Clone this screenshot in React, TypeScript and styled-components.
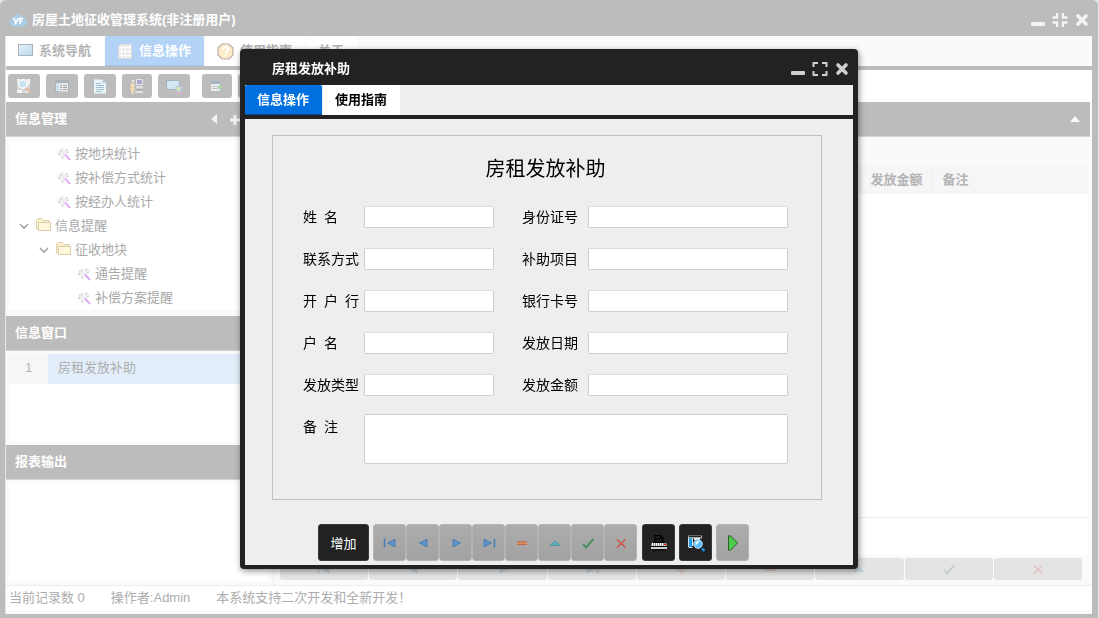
import React from "react";
import styled, { createGlobalStyle, css } from "styled-components";

const GREY = "#bcbcbc";
const INK = "#222222";

const GlobalStyle = createGlobalStyle`
  *, *::before, *::after { box-sizing: border-box; }
  body {
    margin: 0;
    font-family: "Liberation Sans", "Noto Sans CJK SC", sans-serif;
    font-size: 13px;
    line-height: 20px;
    color: #b4b4b4;
    background: #dde6ee;
  }
  button, input, textarea { font: inherit; color: inherit; margin: 0; }
  h1, h2, p, ul { margin: 0; padding: 0; font-size: inherit; }
`;

/* ---------- main window ---------- */

const AppWindow = styled.div`
  min-height: 100vh;
  display: flex;
  flex-direction: column;
  margin-right: 1px;
  padding: 0 6px 4px 5px;
  background: ${GREY};
  border-radius: 6px 6px 0 0;
`;

const TitleBar = styled.header<{ $dark?: boolean }>`
  height: 36px;
  flex: none;
  display: flex;
  align-items: center;
  justify-content: space-between;
  color: #ffffff;
  padding: ${(p) => (p.$dark ? "3px 3px 0 27px" : "3px 2px 0 4px")};
`;

const TitleText = styled.h1`
  display: flex;
  align-items: center;
  gap: 5px;
  font-size: 13px;
  font-weight: 700;
`;

const WindowControls = styled.div<{ $dark?: boolean }>`
  display: flex;
  gap: 6px;
  color: ${(p) => (p.$dark ? "#cfcfcf" : "#f3f3f3")};
`;

const BareButton = styled.button`
  display: flex;
  align-items: center;
  justify-content: center;
  padding: 0;
  border: 0;
  background: none;
`;

const WindowBody = styled.div`
  flex: 1;
  display: flex;
  flex-direction: column;
  background: #fafafa;
  border-left: 1px solid #e4e4e4;
`;

const TabBar = styled.nav<{ $dark?: boolean }>`
  display: flex;
  flex: none;
  gap: 1px;
  height: 34px;
  border-bottom: 4px solid ${(p) => (p.$dark ? INK : GREY)};
`;

const Tab = styled.button<{ $active?: boolean; $dark?: boolean }>`
  display: flex;
  align-items: center;
  gap: 6px;
  height: 30px;
  border: 0;
  padding: 0 13px 0 12px;
  font-weight: 700;
  border-radius: 2px 2px 0 0;
  background: #ffffff;
  color: ${(p) => (p.$dark ? "#000000" : "#b4b4b4")};
  ${(p) =>
    p.$active &&
    css`
      background: ${p.$dark ? "#0070e0" : "#b2d3f5"};
      color: #ffffff;
      box-shadow: inset 0 -1px ${p.$dark ? "#0b4a8c" : "#a3c4e6"};
    `}
`;

const Toolbar = styled.div`
  display: flex;
  flex: none;
  gap: 6px;
  padding: 4px 2px;
  height: 32px;
  background: #ffffff;
`;

const ToolGroup = styled.div`
  display: flex;
  gap: 6px;
  margin-right: 6px;
`;

const ToolButton = styled(BareButton)<{ $narrow?: boolean }>`
  width: ${(p) => (p.$narrow ? 30 : 32)}px;
  height: 24px;
  border-radius: 3px;
  background: ${GREY};
`;

const Workspace = styled.main`
  flex: 1;
  display: grid;
  grid-template-columns: 268px minmax(0, 1fr);
  gap: 4px;
  border-bottom: 1px solid #ececec;
  padding-right: 2px;
`;

const Sidebar = styled.aside`
  display: flex;
  flex-direction: column;
  border-right: 1px solid #efefef;
`;

const PanelHeader = styled.div`
  display: flex;
  flex: none;
  align-items: center;
  justify-content: space-between;
  height: 35px;
  padding: 0 9px;
  color: #ffffff;
  background: ${GREY};
  border-bottom: 1px solid #d4d4d4;
`;

const PanelTitle = styled.h2`
  font-weight: 700;
`;

const PanelTools = styled.div`
  display: flex;
  gap: 11px;
  margin-right: 23px;
`;

const PanelBody = styled.div<{ $height?: number }>`
  ${(p) => (p.$height ? `height: ${p.$height}px;` : "flex: 1;")}
  margin: 3px 4px 4px 3px;
  background: #ffffff;
`;

const TreeBody = styled(PanelBody)`
  margin-bottom: 6px;
  padding-top: 2px;
`;

const Tree = styled.ul`
  list-style: none;
`;

const TreeItem = styled.li<{ $level: number }>`
  display: flex;
  align-items: center;
  gap: 3px;
  height: 24px;
  padding-left: ${(p) => p.$level * 20 - 12}px;
  color: #a9a9a9;
`;

const Twisty = styled.span`
  display: flex;
  width: 15px;
  padding-left: 2px;
`;

const ListTable = styled.table`
  width: 100%;
  border-collapse: collapse;
  background: #e2effb;
`;

const ListIndex = styled.th`
  width: 39px;
  height: 30px;
  padding: 0 0 2px;
  font-weight: 400;
  background: #f6f6f6;
`;

const ListName = styled.td`
  padding: 0 10px 2px;
  color: #adadad;
`;

const ContentPane = styled.section`
  display: flex;
  flex-direction: column;
`;

const GridArea = styled.div`
  flex: 1;
  display: flex;
  flex-direction: column;
  margin: 28px 2px 0 0;
  background: #ffffff;
`;

const DataTable = styled.table`
  width: 100%;
  border-collapse: collapse;
  table-layout: fixed;
`;

const HeadCell = styled.th<{ $width?: number }>`
  width: ${(p) => (p.$width ? p.$width + "px" : "auto")};
  height: 29px;
  padding: 0 8px 0 10px;
  text-align: left;
  white-space: nowrap;
  font-weight: 700;
  background: #f6f6f6;
  border-right: 1px solid #efefef;
  &:last-child { border-right: 0; }
`;

const SummaryRow = styled.div`
  height: 38px;
  margin-top: auto;
  border-top: 1px solid #ebebeb;
`;

const RecordBar = styled.div`
  display: flex;
  flex: none;
  gap: 1px;
  padding: 3px 8px 5px 2px;
`;

const RecordButton = styled(BareButton)`
  flex: 1;
  height: 22px;
  border-radius: 3px;
  background: #e4e4e4;
  svg { opacity: 0.2; }
`;

const StatusBar = styled.footer`
  display: flex;
  flex: none;
  gap: 26px;
  height: 28px;
  padding: 2px 4px 2px 3px;
  background: #ffffff;
  border-bottom: 4px solid #fafafa;
  color: #adadad;
`;

/* ---------- dialog ---------- */

const Overlay = styled.div`
  position: fixed;
  inset: 0;
  display: flex;
  align-items: center;
  justify-content: center;
  padding-right: 1px;
`;

const Dialog = styled.section`
  width: 618px;
  padding: 0 5px 4px;
  color: #000000;
  background: ${INK};
  border-radius: 4px;
  box-shadow: 1px 2px 6px rgba(0, 0, 0, 0.45);
`;

const DialogBody = styled.div`
  background: #eeeeee;
`;

const Form = styled.form`
  display: flex;
  flex-direction: column;
  padding: 16px 31px 4px 27px;
`;

const FormBox = styled.div`
  height: 365px;
  padding: 19px 33px 0 30px;
  border: 1px solid #c0c0c0;
`;

const FormTitle = styled.h2`
  font-size: 20px;
  line-height: 28px;
  font-weight: 400;
  text-align: center;
`;

const Fields = styled.div`
  display: grid;
  grid-template-columns: 61px 130px 28px 66px 1fr;
  grid-auto-rows: 22px;
  row-gap: 20px;
  align-items: start;
  padding-top: 23px;
`;

const Label = styled.label<{ $second?: boolean }>`
  font-size: 14px;
  line-height: 22px;
  white-space: nowrap;
  ${(p) => p.$second && "grid-column: 4;"}
`;

const Field = styled.input`
  width: 100%;
  min-width: 0;
  height: 22px;
  padding: 0 4px;
  background: #ffffff;
  border: 1px solid #cfcfcf;
  border-top-color: #dcdcdc;
  border-radius: 2px;
`;

const Memo = styled.textarea`
  grid-column: 2 / -1;
  height: 50px;
  margin-top: -2px;
  padding: 4px;
  resize: none;
  background: #ffffff;
  border: 1px solid #cfcfcf;
  border-radius: 2px;
`;

const ActionBar = styled.div`
  display: flex;
  gap: 4px;
  margin-top: 24px;
  padding: 0 46px;
`;

const ActionButton = styled(BareButton)<{ $dark?: boolean; $wide?: boolean }>`
  width: ${(p) => (p.$wide ? 51 : 33)}px;
  height: 37px;
  padding-top: ${(p) => (p.$wide ? 2 : 0)}px;
  border-radius: 3px;
  border: 1px solid ${(p) => (p.$dark ? "#3a3a3a" : "#b4b4b4")};
  background: ${(p) => (p.$dark ? INK : "linear-gradient(#acacac, #a2a2a2)")};
  color: #ffffff;
`;

const ButtonRun = styled.div`
  display: flex;
  margin-right: 1px;
  svg { opacity: 0.85; }
`;

/* ---------- drawings ---------- */

const MinimizeIcon = () => (
  <svg width="16" height="16" viewBox="0 0 16 16" aria-hidden="true">
    <rect x="1" y="10" width="14" height="4" rx="1" fill="currentColor" />
  </svg>
);
const ExpandIcon = () => (
  <svg width="16" height="16" viewBox="0 0 16 16" fill="none" stroke="currentColor" strokeWidth="2" aria-hidden="true">
    <path d="M1.500 6V2H6M10 2h4.500v4M14.500 10v4H10M6 14H1.500v-4" />
  </svg>
);
const ShrinkIcon = () => (
  <svg width="16" height="16" viewBox="0 0 16 16" fill="none" stroke="currentColor" strokeWidth="2.400" aria-hidden="true">
    <path d="M0.500 5.500H5V1M11 1v4.500h4.500M15.500 10.500H11V15M5 15v-4.500H0.500" />
  </svg>
);
const CloseIcon = () => (
  <svg width="16" height="16" viewBox="0 0 16 16" fill="none" stroke="currentColor" strokeWidth="3.600" strokeLinecap="round" aria-hidden="true">
    <path d="M4 4l8 8M12 4l-8 8" />
  </svg>
);
const LogoIcon = () => (
  <svg width="18" height="14" viewBox="0 0 18 14" aria-hidden="true">
    <path d="M5 13.500a4.200 4.200 0 0 1-1.500-8.200A5.500 5.500 0 0 1 13 3.500a5 5 0 0 1 .500 10z" fill="#abcde4" />
    <path d="M4.500 5l2.400 4M9.500 5l-3.500 6.500M11 11V5.500h3M11 8h2.500" stroke="#fff" strokeWidth="1.600" fill="none" />
  </svg>
);
const ScreenIcon = () => (
  <svg width="15" height="14" viewBox="0 0 15 14" aria-hidden="true">
    <defs>
      <linearGradient id="screen" x1="0" y1="0" x2="1" y2="1">
        <stop offset="0" stopColor="#e3f3fa" />
        <stop offset="1" stopColor="#bcd8ee" />
      </linearGradient>
    </defs>
    <rect x="0.500" y="0.500" width="14" height="11" fill="url(#screen)" stroke="#a9b3ba" />
  </svg>
);
const GridIcon = () => (
  <svg width="16" height="15" viewBox="0 0 16 15" aria-hidden="true">
    <path d="M4 0h11v15H1V3z" fill="#e9e9ea" />
    <path d="M4.500 0v15M8.500 0v15M12.500 0v15M1 3.500h14M1 7.500h14M1 11.500h14" stroke="#fff" />
    <path d="M4 .5h10.500v14h-13V3z" fill="none" stroke="#dadbe0" />
  </svg>
);
const HelpIcon = () => (
  <svg width="17" height="17" viewBox="0 0 17 17" aria-hidden="true">
    <path d="M5 1h7l4 4v7l-4 4H5l-4-4V5z" fill="#fdebc9" stroke="#b9b0ae" strokeWidth="1.200" />
    <path d="M6 6.500c0-3 5-3 5 0 0 1.800-2.500 1.800-2.500 3.500M8.500 11.500v1.800" fill="none" stroke="#fff" strokeWidth="2" />
  </svg>
);
const SearchDocIcon = () => (
  <svg width="16" height="16" viewBox="0 0 16 16" aria-hidden="true">
    <path d="M1 1h13v14H1z" fill="#d6d6d6" />
    <path d="M11 1h3v5h-2zM1 12h5v3H1zM1 1h3L1 5zM10 13h4v2h-4z" fill="#f6f6f6" />
    <circle cx="7" cy="6" r="4.300" fill="#c9e3f0" stroke="#fafafa" strokeWidth="1.400" />
    <path d="M10 10l4 4.500" stroke="#e8b9a2" strokeWidth="2.600" />
  </svg>
);
const FormListIcon = () => (
  <svg width="14" height="14" viewBox="0 0 14 14" aria-hidden="true">
    <path d="M.5 1.500h13v11H.5z" fill="#cfe0ea" stroke="#acb1b5" />
    <path d="M1 2h12v2H1z" fill="#a9b3ba" />
    <path d="M4 4.500h9v8H4z" fill="#ececec" />
    <path d="M5 6.500h2M8 6.500h4M5 8.500h2M8 8.500h4M5 10.500h2M8 10.500h4" stroke="#a6a6a6" />
  </svg>
);
const DocIcon = () => (
  <svg width="14" height="15" viewBox="0 0 14 15" aria-hidden="true">
    <path d="M1 .5h8.500L13 4v10.500H1z" fill="#e9f3fa" />
    <path d="M9.500 .5V4H13z" fill="#a9cbe0" />
    <path d="M3 4.500h5M3 6.500h8M3 8.500h8M3 10.500h8M3 12.500h6" stroke="#a3bfd1" />
  </svg>
);
const UserKeyIcon = () => (
  <svg width="16" height="16" viewBox="0 0 16 16" aria-hidden="true">
    <path d="M7.500 1.500h6v5h-6z" fill="#a9a9cf" stroke="#e4e4e4" />
    <path d="M7 8h7v2.500H7zM6 13h8v2H6z" fill="#dedede" />
    <path d="M8 11.500h6" stroke="#a4a4a4" />
    <circle cx="3.500" cy="7.500" r="2.200" fill="#f4ddb2" />
    <path d="M1.500 9.500h4v3h-.8V16h-2.400v-3.500h-.8z" fill="#f4ddb2" />
    <path d="M2 3l3-1.500v3z" fill="#f1f1f1" />
  </svg>
);
const ScreenUserIcon = () => (
  <svg width="17" height="15" viewBox="0 0 17 15" aria-hidden="true">
    <path d="M.5 1.500h13v9H.5z" fill="#cfe6f3" stroke="#a6b1b9" />
    <circle cx="12.500" cy="10" r="3.200" fill="#b4dccb" stroke="#b8c6e6" />
    <path d="M9 14.500l1.500-2h4l1.500 2z" fill="#dfafd4" />
    <circle cx="12.500" cy="9.500" r="1.500" fill="#ece3a4" />
  </svg>
);
const AddRowIcon = () => (
  <svg width="14" height="12" viewBox="0 0 14 12" aria-hidden="true">
    <path d="M1 1h9v10H1z" fill="#ececec" />
    <path d="M1 1h9v3H1z" fill="#a4b4bf" />
    <path d="M2 6.500h6M2 8.500h6" stroke="#c5c5c5" />
    <path d="M7.500 7.500h5M10 5v5" stroke="#a3d4a6" strokeWidth="1.600" />
  </svg>
);
const WandIcon = () => (
  <svg width="15" height="14" viewBox="0 0 15 14" aria-hidden="true">
    <path d="M5 1l2 2 3-2 1 2 2 1-3 2-4 6-2-1-2-3-1-3 3-1z" fill="#f0f0f0" />
    <path d="M1 8l2-2M2 4l2 1M5 12l1-2M10 2l-1 2M4 2l1 2M12 5l-2 1" stroke="#d0d0d0" strokeWidth="1.100" />
    <path d="M6 5.500l7 7.500" stroke="#f4e6fb" strokeWidth="2.600" />
    <path d="M8 7.500l5 5.500" stroke="#d5a5ee" strokeWidth="1.500" />
  </svg>
);
const FolderIcon = () => (
  <svg width="17" height="16" viewBox="0 0 17 16" aria-hidden="true">
    <path d="M1.500 11V2L3 .5h4L8.500 2.500H14V11z" fill="#fbf1cf" stroke="#dccfa9" />
    <path d="M3.500 12.500V4.500h12v8z" fill="#fff8dc" stroke="#d9cba4" />
  </svg>
);
const ChevronIcon = () => (
  <svg width="10" height="8" viewBox="0 0 10 8" aria-hidden="true">
    <path d="M1 2l4 4 4-4" fill="none" stroke="#a6a6a6" strokeWidth="1.700" />
  </svg>
);
const PanelLeftIcon = () => (
  <svg width="8" height="12" viewBox="0 0 8 12" aria-hidden="true"><path d="M7 1v10L1 6z" fill="#f3f3f3" /></svg>
);
const PanelPlusIcon = () => (
  <svg width="12" height="14" viewBox="0 0 12 14" aria-hidden="true"><path d="M6 3v10M1 8h10" stroke="#f3f3f3" strokeWidth="3" /></svg>
);
const PanelUpIcon = () => (
  <svg width="12" height="6" viewBox="0 0 12 6" aria-hidden="true"><path d="M1 6h10L6 0z" fill="#f8f8f8" /></svg>
);

const glyphs: Record<string, React.ReactNode> = {
  first: (
    <>
      <path d="M2.500 3.500v9" stroke="#3b78b8" strokeWidth="1.600" />
      <path d="M13 4v8L5.500 8z" fill="#4f8ed0" stroke="#3372b3" strokeWidth=".8" />
    </>
  ),
  prev: <path d="M12 4v8L4.500 8z" fill="#4f8ed0" stroke="#3372b3" strokeWidth=".8" />,
  next: <path d="M5 4v8L12.500 8z" fill="#4f8ed0" stroke="#3372b3" strokeWidth=".8" />,
  last: (
    <>
      <path d="M13.500 3.500v9" stroke="#3b78b8" strokeWidth="1.600" />
      <path d="M3 4v8L10.500 8z" fill="#4f8ed0" stroke="#3372b3" strokeWidth=".8" />
    </>
  ),
  insert: <path d="M8 3v10M3 7h10M3 9.500h10" stroke="#e0603c" strokeWidth="1.500" />,
  remove: (
    <>
      <rect x="3" y="6.500" width="10" height="3" fill="#d9905c" />
      <path d="M3 6.800h10M3 9.500h10" stroke="#cf5a3c" />
    </>
  ),
  edit: <path d="M3 10.500h10L8 6z" fill="#4fb0bd" stroke="#35909d" strokeWidth=".8" />,
  post: <path d="M3 9l3 3.500 7.500-8.500" fill="none" stroke="#3b8b52" strokeWidth="1.900" />,
  cancel: <path d="M4 4.500l8.500 8M12.500 4.500l-8.500 8" fill="none" stroke="#cf4a3a" strokeWidth="1.600" />,
};

const Glyph = ({ name }: { name: string }) => (
  <svg width="16" height="16" viewBox="0 0 16 16" aria-hidden="true">{glyphs[name]}</svg>
);

const PrinterIcon = () => (
  <svg width="16" height="18" viewBox="0 0 16 18" aria-hidden="true">
    <path d="M4 8V1.500h5.500L12 4v4" fill="#191919" stroke="#000" strokeWidth="1.200" />
    <path d="M9.500 1v3H12M6 5h3" stroke="#000" fill="none" />
    <path d="M2 8h12l2 2v2H0v-2z" fill="#8d8d8d" />
    <path d="M2 8.500h12" stroke="#000" />
    <path d="M1 9.500h12" stroke="#fff" strokeDasharray="1 1" />
    <path d="M1 10.500h13M1 11.500h13" stroke="#f4f4f4" strokeDasharray="1 1" />
    <rect x="13" y="10" width="2" height="1" fill="#f00" />
    <path d="M0 12.500h16" stroke="#000" />
    <path d="M0 13h16v2H0z" fill="#cfcfcf" />
    <path d="M1 16h14" stroke="#000" />
  </svg>
);
const PreviewIcon = () => (
  <svg width="18" height="18" viewBox="0 0 18 18" aria-hidden="true">
    <path d="M1 1.500h14v3H1z" fill="#a9a9a9" />
    <path d="M2 2.500h12" stroke="#222" />
    <path d="M2 4h3v9H2z" fill="#1e9bea" />
    <path d="M1.500 4v9M5.500 4v8M1.500 13.500h4" stroke="#ddd" />
    <path d="M7 4h6v2H7z" fill="#e8e8e8" />
    <circle cx="11" cy="10" r="4.300" fill="#5dbbfa" stroke="#b9e2fd" />
    <path d="M8.500 11.500V8.500l2-1.500h2.500z" fill="#fff" />
    <path d="M15 14.500l2.500 2.500" stroke="#1f9df5" strokeWidth="2.200" />
  </svg>
);
const PlayIcon = () => (
  <svg width="12" height="16" viewBox="0 0 12 16" aria-hidden="true">
    <path d="M1.500 .8h2L10.500 8l-7 7.200h-2z" fill="#4ccb4a" stroke="#2c5f2c" />
  </svg>
);

/* ---------- data ---------- */

const tools = [
  { label: "查询", icon: <SearchDocIcon /> },
  { label: "列表", icon: <FormListIcon /> },
  { label: "文档", icon: <DocIcon /> },
  { label: "用户", icon: <UserKeyIcon />, narrow: true },
  { label: "窗口", icon: <ScreenUserIcon /> },
];

const tree = [
  { level: 3, text: "按地块统计" },
  { level: 3, text: "按补偿方式统计" },
  { level: 3, text: "按经办人统计" },
  { level: 1, text: "信息提醒", folder: true },
  { level: 2, text: "征收地块", folder: true },
  { level: 4, text: "通告提醒" },
  { level: 4, text: "补偿方案提醒" },
];

const rows: [string, string][] = [
  ["姓\u2002名", "身份证号"],
  ["联系方式", "补助项目"],
  ["开\u2002户\u2002行", "银行卡号"],
  ["户\u2002名", "发放日期"],
  ["发放类型", "发放金额"],
];

const recordActions = ["first", "prev", "next", "last", "insert", "remove", "edit", "post", "cancel"];
const dialogActions = recordActions.filter((name) => name !== "insert");

const Controls = ({ dark }: { dark?: boolean }) => (
  <WindowControls $dark={dark}>
    <BareButton aria-label="最小化"><MinimizeIcon /></BareButton>
    <BareButton aria-label={dark ? "最大化" : "还原"}>{dark ? <ExpandIcon /> : <ShrinkIcon />}</BareButton>
    <BareButton aria-label="关闭"><CloseIcon /></BareButton>
  </WindowControls>
);

export default function App() {
  return (
    <>
      <GlobalStyle />
      <AppWindow>
        <TitleBar>
          <TitleText><LogoIcon />房屋土地征收管理系统(非注册用户)</TitleText>
          <Controls />
        </TitleBar>
        <WindowBody>
          <TabBar>
            <Tab><ScreenIcon />系统导航</Tab>
            <Tab $active><GridIcon />信息操作</Tab>
            <Tab><HelpIcon />使用指南</Tab>
            <Tab>关于</Tab>
          </TabBar>
          <Toolbar>
            <ToolGroup>
              {tools.map((t) => (
                <ToolButton key={t.label} aria-label={t.label} $narrow={t.narrow}>{t.icon}</ToolButton>
              ))}
            </ToolGroup>
            <ToolButton aria-label="新增" $narrow><AddRowIcon /></ToolButton>
            <ToolButton aria-label="删除" />
          </Toolbar>
          <Workspace>
            <Sidebar>
              <PanelHeader>
                <PanelTitle>信息管理</PanelTitle>
                <PanelTools>
                  <BareButton aria-label="收起"><PanelLeftIcon /></BareButton>
                  <BareButton aria-label="展开"><PanelPlusIcon /></BareButton>
                </PanelTools>
              </PanelHeader>
              <TreeBody $height={170}>
                <Tree>
                  {tree.map((n) => (
                    <TreeItem key={n.text} $level={n.level}>
                      {n.folder && <Twisty><ChevronIcon /></Twisty>}
                      {n.folder ? <FolderIcon /> : <WandIcon />}
                      {n.text}
                    </TreeItem>
                  ))}
                </Tree>
              </TreeBody>
              <PanelHeader><PanelTitle>信息窗口</PanelTitle></PanelHeader>
              <PanelBody $height={87}>
                <ListTable>
                  <tbody>
                    <tr><ListIndex scope="row">1</ListIndex><ListName>房租发放补助</ListName></tr>
                  </tbody>
                </ListTable>
              </PanelBody>
              <PanelHeader><PanelTitle>报表输出</PanelTitle></PanelHeader>
              <PanelBody />
            </Sidebar>
            <ContentPane>
              <PanelHeader>
                <span />
                <BareButton aria-label="折叠"><PanelUpIcon /></BareButton>
              </PanelHeader>
              <GridArea>
                <DataTable>
                  <thead>
                    <tr>
                      <HeadCell />
                      <HeadCell $width={72}>发放金额</HeadCell>
                      <HeadCell $width={156}>备注</HeadCell>
                    </tr>
                  </thead>
                </DataTable>
                <SummaryRow />
              </GridArea>
              <RecordBar>
                {recordActions.map((name) => (
                  <RecordButton key={name} aria-label={name}><Glyph name={name} /></RecordButton>
                ))}
              </RecordBar>
            </ContentPane>
          </Workspace>
          <StatusBar>
            <span>当前记录数 0</span>
            <span>操作者:Admin</span>
            <span>本系统支持二次开发和全新开发！</span>
          </StatusBar>
        </WindowBody>
      </AppWindow>

      <Overlay>
        <Dialog role="dialog" aria-label="房租发放补助">
          <TitleBar $dark>
            <TitleText>房租发放补助</TitleText>
            <Controls dark />
          </TitleBar>
          <DialogBody>
            <TabBar $dark>
              <Tab $dark $active>信息操作</Tab>
              <Tab $dark>使用指南</Tab>
            </TabBar>
            <Form onSubmit={(e) => e.preventDefault()}>
              <FormBox>
                <FormTitle>房租发放补助</FormTitle>
                <Fields>
                  {rows.map(([a, b], i) => (
                    <React.Fragment key={b}>
                      <Label htmlFor={`a${i}`}>{a}</Label>
                      <Field id={`a${i}`} />
                      <Label htmlFor={`b${i}`} $second>{b}</Label>
                      <Field id={`b${i}`} />
                    </React.Fragment>
                  ))}
                  <Label htmlFor="memo">{"备\u2002注"}</Label>
                  <Memo id="memo" />
                </Fields>
              </FormBox>
              <ActionBar>
                <ActionButton type="button" $dark $wide>增加</ActionButton>
                <ButtonRun>
                  {dialogActions.map((name) => (
                    <ActionButton key={name} type="button" aria-label={name}><Glyph name={name} /></ActionButton>
                  ))}
                </ButtonRun>
                <ActionButton type="button" $dark aria-label="打印"><PrinterIcon /></ActionButton>
                <ActionButton type="button" $dark aria-label="预览"><PreviewIcon /></ActionButton>
                <ActionButton type="button" aria-label="执行"><PlayIcon /></ActionButton>
              </ActionBar>
            </Form>
          </DialogBody>
        </Dialog>
      </Overlay>
    </>
  );
}
